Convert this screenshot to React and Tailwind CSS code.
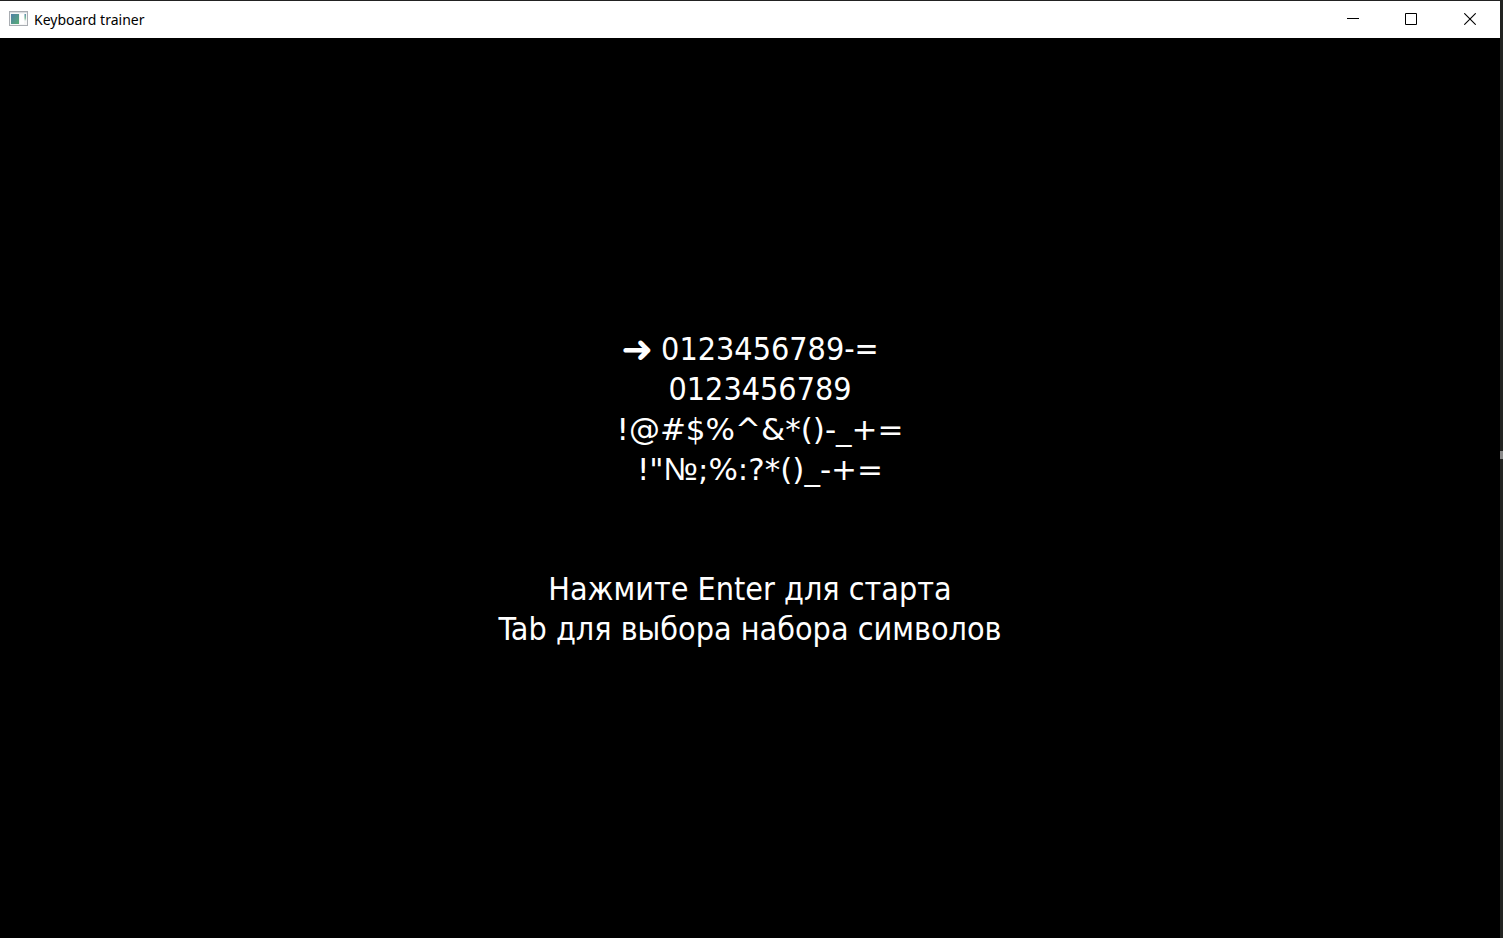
const charSets = [
  { chars: "0123456789-=", symbols: false },
  { chars: "0123456789", symbols: false },
  { chars: "!@#$%^&*()-_+=", symbols: true },
  { chars: '!"№;%:?*()_-+=', symbols: true },
];

function AppIcon() {
  return (
    <svg width="20" height="16" viewBox="0 0 20 16" aria-hidden="true" className="shrink-0">
      <defs>
        <linearGradient id="pane" x1="0" y1="0" x2="1" y2="1">
          <stop offset="0" stopColor="#4f7fa8" />
          <stop offset="1" stopColor="#58ad75" />
        </linearGradient>
        <linearGradient id="strip" x1="0" y1="0" x2="0" y2="1">
          <stop offset="0" stopColor="#5c8fae" />
          <stop offset="0.6" stopColor="#7fbf9a" />
          <stop offset="1" stopColor="#f4f4f4" />
        </linearGradient>
      </defs>
      <rect x="0.5" y="0.5" width="18" height="14" fill="#f6f6f6" stroke="#a9adb2" />
      <rect x="1" y="1" width="17" height="1" fill="#d9dce0" />
      <rect x="2" y="3" width="8" height="10" fill="url(#pane)" />
      <rect x="11" y="3" width="4" height="10" fill="#ffffff" />
      <rect x="15.5" y="3" width="1.5" height="7" fill="url(#strip)" />
    </svg>
  );
}

function CaptionButton({ label, width, children }) {
  return (
    <button type="button" aria-label={label} className={`flex items-center justify-center ${width}`}>
      <svg width="12" height="12" viewBox="0 0 12 12" fill="none" stroke="#000000" aria-hidden="true">
        {children}
      </svg>
    </button>
  );
}

function TitleBar() {
  return (
    <header className="flex h-[38px] shrink-0 items-stretch border-t border-[#222222] bg-white pb-px text-black">
      <div className="flex flex-1 items-center gap-[5px] pl-[9px]">
        <AppIcon />
        <h1 className="pt-px font-['Noto_Sans',sans-serif] text-sm">Keyboard trainer</h1>
      </div>
      <div className="flex items-stretch">
        <CaptionButton label="Minimize" width="w-[58px]">
          <path d="M0 5.5H12" />
        </CaptionButton>
        <CaptionButton label="Maximize" width="w-[58px]">
          <path d="M0.5 0.5H11.5V11.5H0.5Z" />
        </CaptionButton>
        <CaptionButton label="Close" width="w-[60px]">
          <path d="M0.3 0.3L11.7 11.7M11.7 0.3L0.3 11.7" strokeWidth="1.1" />
        </CaptionButton>
      </div>
    </header>
  );
}

function CharSet({ chars, symbols }) {
  if (!symbols) return <span>{chars}</span>;
  const [before, after] = chars.split("№");
  return (
    <span className="font-['DejaVu_Sans',sans-serif] text-[31px]">
      {before}
      {after !== undefined && <span className="font-['Liberation_Sans',sans-serif] text-[32px]">№</span>}
      {after}
    </span>
  );
}

export default function App() {
  const selected = 0;
  return (
    <div className="flex h-screen bg-black">
      <div className="flex min-w-0 flex-1 flex-col">
        <TitleBar />
        <main className="flex flex-1 flex-col items-center justify-center gap-20 pt-0.5 text-center font-['DejaVu_Sans_Condensed','DejaVu_Sans',sans-serif] text-[32px] leading-10 text-white">
          <ul>
            {charSets.map((set, i) => (
              <li
                key={i}
                className={
                  i === selected
                    ? "flex h-10 items-center justify-center gap-2"
                    : "flex h-10 items-center justify-center pl-5"
                }
              >
                {i === selected && <span className="font-['DejaVu_Sans',sans-serif] text-[38px]">➜</span>}
                <CharSet {...set} />
              </li>
            ))}
          </ul>
          <div>
            <p>Нажмите Enter для старта</p>
            <p>Tab для выбора набора символов</p>
          </div>
        </main>
      </div>
      <div className="flex w-[3px] flex-col justify-center bg-[#222321]">
        <div className="mb-7 h-2 bg-[#8a8a8a]" />
      </div>
    </div>
  );
}
